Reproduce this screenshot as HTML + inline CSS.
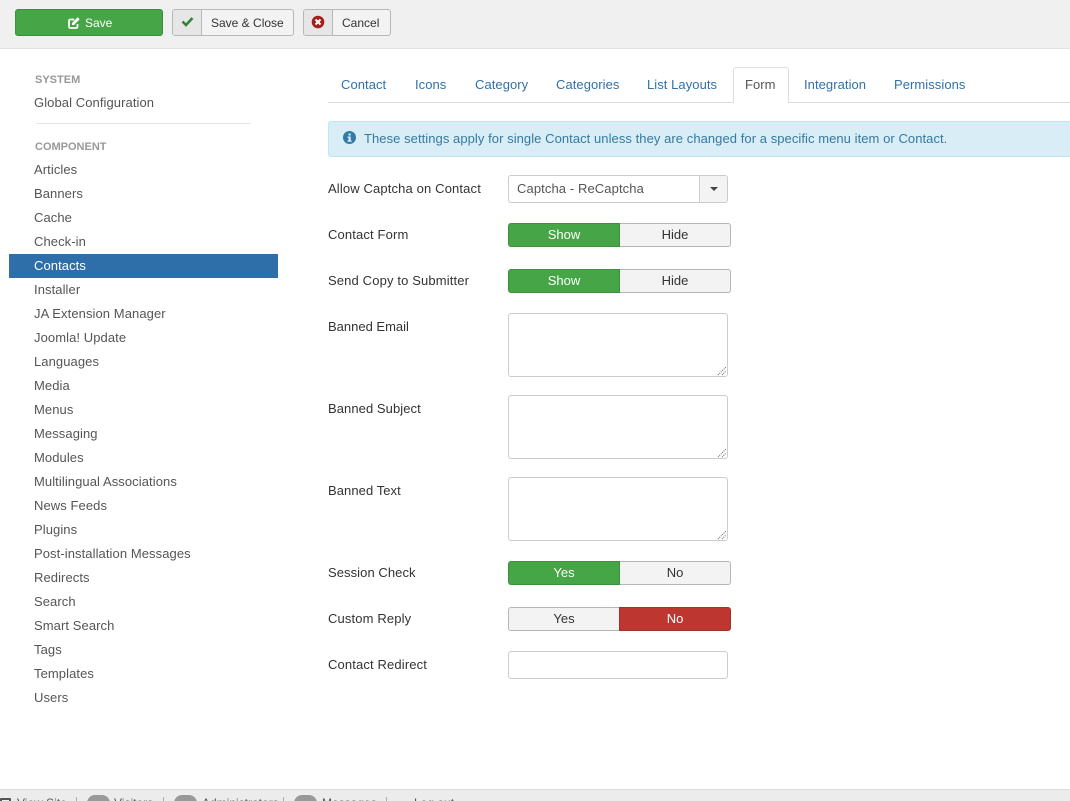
<!DOCTYPE html>
<html><head><meta charset="utf-8"><style>
*{box-sizing:border-box}
html,body{margin:0;padding:0;width:1070px;height:801px;overflow:hidden;background:#fff}
body{font-family:"Liberation Sans",sans-serif;font-size:13px;color:#515151;position:relative}
.a{position:absolute;white-space:nowrap}
.t{position:absolute;white-space:nowrap;line-height:18px;letter-spacing:.06px}
#top{left:0;top:0;width:1070px;height:49px;background:#f0f0f0;border-bottom:1px solid #e2e2e2}
.b{position:absolute;top:9px;height:27px;border:1px solid #b8b8b8;border-radius:3px;background:#f3f3f3;overflow:hidden;font-size:12px;color:#333}
.ic{position:absolute;left:0;top:0;bottom:0;width:29px;background:#e6e6e6;border-right:1px solid #b8b8b8}
.nav{position:absolute;left:34px;color:#555;line-height:18px;white-space:nowrap;letter-spacing:.08px}
.h{position:absolute;left:35px;font-size:11px;font-weight:bold;color:#999;line-height:14px}
.tab{position:absolute;top:76px;color:#3071a9;line-height:18px;white-space:nowrap;letter-spacing:.06px}
.l{position:absolute;left:328px;color:#333;line-height:18px;white-space:nowrap;letter-spacing:.14px}
.g{position:absolute;left:508px;width:223px;height:24px;font-size:13px;line-height:22px;text-align:center}
.g div{position:absolute;top:0;height:24px;border:1px solid #b5b5b5;background:#f3f3f3;color:#333}
.g .x{left:0;width:112px;border-radius:3px 0 0 3px}
.g .y{left:112px;width:111px;border-radius:0 3px 3px 0;border-left:0}
.g .on{background:#46a546;border-color:#3d8f3d;color:#fff}
.g .x2{width:112px}
.g .off{background:#bd362f;border-color:#a4302a;color:#fff;left:111px;width:112px;border-left:1px solid #a4302a}
.ta{position:absolute;left:508px;width:220px;height:64px;border:1px solid #ccc;border-radius:3px;background:#fff}
.ta svg{position:absolute;right:0;bottom:0}
</style></head><body>
<div class="a" id="top"></div>
<div class="b" style="left:15px;width:148px;background:#46a546;border-color:#3d8f3d;color:#fff;text-align:center;line-height:25px"><svg width="12" height="12" viewBox="0 0 12 12" style="position:absolute;left:52px;top:7px"><path d="M9.500 7v2.800a1.200 1.200 0 0 1-1.200 1.200H2.200A1.200 1.200 0 0 1 1 9.800V3.700a1.200 1.200 0 0 1 1.200-1.200h4" fill="none" stroke="#fff" stroke-width="1.800"/><path d="M4 6L9.700 .3l2 2L6 8H4z" fill="#fff"/></svg><span style="position:absolute;left:69px;top:1px">Save</span></div>
<div class="b" style="left:172px;width:122px"><div class="ic"><svg width="13" height="11" viewBox="0 0 13 11" style="position:absolute;left:7.500px;top:6px"><path d="M1.500 5.500l3.500 3.500 6.500-7" fill="none" stroke="#378137" stroke-width="2.600"/></svg></div><span class="a" style="left:38px;top:1px;line-height:25px">Save &amp; Close</span></div>
<div class="b" style="left:303px;width:88px"><div class="ic"><svg width="14" height="14" viewBox="0 0 14 14" style="position:absolute;left:7px;top:5px"><circle cx="7" cy="7" r="6.300" fill="#a51f18"/><path d="M4.500 4.500l5 5M9.500 4.500l-5 5" stroke="#fff" stroke-width="2"/></svg></div><span class="a" style="left:38px;top:1px;line-height:25px">Cancel</span></div>

<div class="h" style="top:73px">SYSTEM</div>
<div class="nav" style="top:94px">Global Configuration</div>
<div class="a" style="left:36px;top:123px;width:215px;height:1px;background:#e5e5e5"></div>
<div class="h" style="top:140px">COMPONENT</div>
<div class="a" style="left:9px;top:254px;width:269px;height:24px;background:#2f6fa9"></div>
<div class="nav" style="top:161px">Articles</div>
<div class="nav" style="top:185px">Banners</div>
<div class="nav" style="top:209px">Cache</div>
<div class="nav" style="top:233px">Check-in</div>
<div class="nav" style="top:257px;color:#fff">Contacts</div>
<div class="nav" style="top:281px">Installer</div>
<div class="nav" style="top:305px">JA Extension Manager</div>
<div class="nav" style="top:329px">Joomla! Update</div>
<div class="nav" style="top:353px">Languages</div>
<div class="nav" style="top:377px">Media</div>
<div class="nav" style="top:401px">Menus</div>
<div class="nav" style="top:425px">Messaging</div>
<div class="nav" style="top:449px">Modules</div>
<div class="nav" style="top:473px">Multilingual Associations</div>
<div class="nav" style="top:497px">News Feeds</div>
<div class="nav" style="top:521px">Plugins</div>
<div class="nav" style="top:545px">Post-installation Messages</div>
<div class="nav" style="top:569px">Redirects</div>
<div class="nav" style="top:593px">Search</div>
<div class="nav" style="top:617px">Smart Search</div>
<div class="nav" style="top:641px">Tags</div>
<div class="nav" style="top:665px">Templates</div>
<div class="nav" style="top:689px">Users</div>

<div class="a" style="left:328px;top:102px;width:742px;height:1px;background:#ddd"></div>
<div class="a" style="left:733px;top:67px;width:56px;height:36px;background:#fff;border:1px solid #ddd;border-bottom:0;border-radius:3px 3px 0 0"></div>
<div class="tab" style="left:341px">Contact</div>
<div class="tab" style="left:415px">Icons</div>
<div class="tab" style="left:475px">Category</div>
<div class="tab" style="left:556px">Categories</div>
<div class="tab" style="left:647px">List Layouts</div>
<div class="tab" style="left:745px;color:#555">Form</div>
<div class="tab" style="left:804px">Integration</div>
<div class="tab" style="left:894px">Permissions</div>

<div class="a" style="left:328px;top:121px;width:750px;height:36px;background:#d9edf7;border:1px solid #bce8f1;border-radius:3px"></div>
<svg class="a" width="13" height="13" viewBox="0 0 13 13" style="left:343px;top:131px"><circle cx="6.500" cy="6.500" r="6.500" fill="#2f7ba5"/><rect x="5.500" y="2.500" width="2.200" height="2" fill="#d9edf7"/><path d="M4.500 5.500h3.200v4h1v1.200H4.500V9.500h1V6.700h-1z" fill="#d9edf7"/></svg>
<div class="t" style="left:364px;top:130px;color:#35799f">These settings apply for single Contact unless they are changed for a specific menu item or Contact.</div>

<div class="l" style="top:180px">Allow Captcha on Contact</div>
<div class="a" style="left:508px;top:175px;width:220px;height:28px;border:1px solid #ccc;border-radius:3px;background:#fff;line-height:25px;padding-left:8px;color:#555;letter-spacing:.1px">Captcha - ReCaptcha<div class="a" style="right:0;top:0;width:28px;height:26px;background:#f3f3f3;border-left:1px solid #ccc;border-radius:0 3px 3px 0"><div class="a" style="left:10px;top:11px;width:0;height:0;border-left:4px solid transparent;border-right:4px solid transparent;border-top:4px solid #444"></div></div></div>

<div class="l" style="top:226px">Contact Form</div>
<div class="g" style="top:223px"><div class="x on">Show</div><div class="y">Hide</div></div>
<div class="l" style="top:272px">Send Copy to Submitter</div>
<div class="g" style="top:269px"><div class="x on">Show</div><div class="y">Hide</div></div>

<div class="l" style="top:318px;letter-spacing:0">Banned Email</div>
<div class="ta" style="top:313px"><svg width="10" height="10"><path d="M1 9L9 1M5 9L9 5" stroke="#666" stroke-width="1" stroke-dasharray="1 1"/></svg></div>
<div class="l" style="top:400px;letter-spacing:.07px">Banned Subject</div>
<div class="ta" style="top:395px"><svg width="10" height="10"><path d="M1 9L9 1M5 9L9 5" stroke="#666" stroke-width="1" stroke-dasharray="1 1"/></svg></div>
<div class="l" style="top:482px;letter-spacing:.07px">Banned Text</div>
<div class="ta" style="top:477px"><svg width="10" height="10"><path d="M1 9L9 1M5 9L9 5" stroke="#666" stroke-width="1" stroke-dasharray="1 1"/></svg></div>

<div class="l" style="top:564px;letter-spacing:.07px">Session Check</div>
<div class="g" style="top:561px"><div class="x on">Yes</div><div class="y">No</div></div>
<div class="l" style="top:610px">Custom Reply</div>
<div class="g" style="top:607px"><div class="x x2">Yes</div><div class="y off">No</div></div>
<div class="l" style="top:656px">Contact Redirect</div>
<div class="a" style="left:508px;top:651px;width:220px;height:28px;border:1px solid #ccc;border-radius:3px;background:#fff"></div>

<div class="a" style="left:0;top:789px;width:1070px;height:12px;background:#ececec;border-top:1px solid #ddd;overflow:hidden;font-size:12px;color:#555">
<span class="a" style="left:17px;top:6px;line-height:14px">View Site</span>
<div class="a" style="left:0;top:8px;width:11px;height:10px;border:2px solid #555;border-radius:1px"></div>
<div class="a" style="left:76px;top:7px;width:1px;height:10px;background:#aaa"></div>
<div class="a" style="left:87px;top:5px;width:23px;height:16px;border-radius:8px;background:#999"></div>
<span class="a" style="left:114px;top:6px;line-height:14px">Visitors</span>
<div class="a" style="left:163px;top:7px;width:1px;height:10px;background:#aaa"></div>
<div class="a" style="left:174px;top:5px;width:23px;height:16px;border-radius:8px;background:#999"></div>
<span class="a" style="left:202px;top:6px;line-height:14px">Administrators</span>
<div class="a" style="left:283px;top:7px;width:1px;height:10px;background:#aaa"></div>
<div class="a" style="left:294px;top:5px;width:23px;height:16px;border-radius:8px;background:#999"></div>
<span class="a" style="left:322px;top:6px;line-height:14px">Messages</span>
<div class="a" style="left:386px;top:7px;width:1px;height:10px;background:#aaa"></div>
<span class="a" style="left:414px;top:6px;line-height:14px">Log out</span>
</div>
</body></html>
